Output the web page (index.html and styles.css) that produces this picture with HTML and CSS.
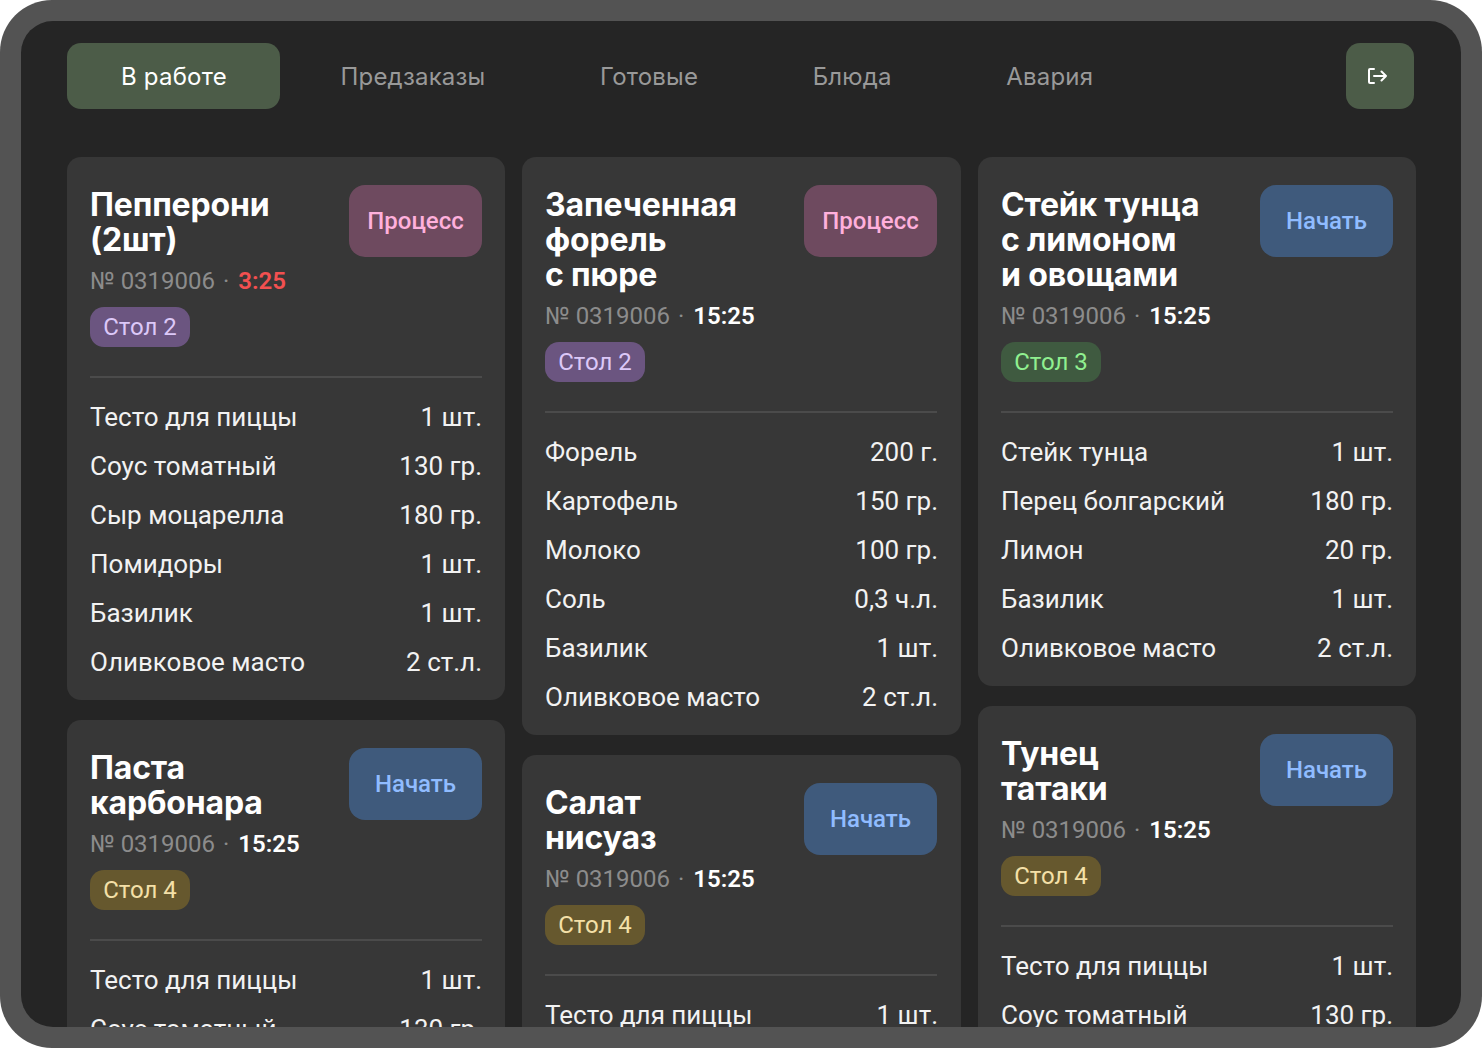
FILE: index.html
```html
<!DOCTYPE html>
<html lang="ru">
<head>
    <meta charset="UTF-8">
    <title>Кухня</title>
    <link rel="stylesheet" href="styles.css">
</head>
<body>
    <div class="frame">
        <div class="screen">
            <nav class="nav">
                <a class="tab active">В работе</a>
                <a class="tab">Предзаказы</a>
                <a class="tab">Готовые</a>
                <a class="tab">Блюда</a>
                <a class="tab">Авария</a>
                <button class="exit" aria-label="Выход">
                    <svg width="19" height="16" viewBox="0 0 19 16" fill="none" stroke="#fff" stroke-width="2" stroke-linecap="round" stroke-linejoin="round">
                        <path d="M6 1H2a1 1 0 0 0-1 1v12a1 1 0 0 0 1 1h4"/>
                        <path d="M6 8h12M13.500 3.500 18 8l-4.500 4.500"/>
                    </svg>
                </button>
            </nav>
            <main class="columns">
                <div class="column">
                    <section class="card">
                        <div class="card-head">
                            <div class="info">
                                <h2>Пепперони<br>(2шт)</h2>
                                <p class="meta">№ 0319006 <span class="dot">·</span> <b class="late">3:25</b></p>
                                <span class="badge purple">Стол 2</span>
                            </div>
                            <button class="action process">Процесс</button>
                        </div>
                        <ul class="items">
                            <li><span>Тесто для пиццы</span><span>1 шт.</span></li>
                            <li><span>Соус томатный</span><span>130 гр.</span></li>
                            <li><span>Сыр моцарелла</span><span>180 гр.</span></li>
                            <li><span>Помидоры</span><span>1 шт.</span></li>
                            <li><span>Базилик</span><span>1 шт.</span></li>
                            <li><span>Оливковое масто</span><span>2 ст.л.</span></li>
                        </ul>
                    </section>
                    <section class="card">
                        <div class="card-head">
                            <div class="info">
                                <h2>Паста<br>карбонара</h2>
                                <p class="meta">№ 0319006 <span class="dot">·</span> <b>15:25</b></p>
                                <span class="badge gold">Стол 4</span>
                            </div>
                            <button class="action start">Начать</button>
                        </div>
                        <ul class="items">
                            <li><span>Тесто для пиццы</span><span>1 шт.</span></li>
                            <li><span>Соус томатный</span><span>130 гр.</span></li>
                        </ul>
                    </section>
                </div>
                <div class="column">
                    <section class="card">
                        <div class="card-head">
                            <div class="info">
                                <h2>Запеченная<br>форель<br>с пюре</h2>
                                <p class="meta">№ 0319006 <span class="dot">·</span> <b>15:25</b></p>
                                <span class="badge purple">Стол 2</span>
                            </div>
                            <button class="action process">Процесс</button>
                        </div>
                        <ul class="items">
                            <li><span>Форель</span><span>200 г.</span></li>
                            <li><span>Картофель</span><span>150 гр.</span></li>
                            <li><span>Молоко</span><span>100 гр.</span></li>
                            <li><span>Соль</span><span>0,3 ч.л.</span></li>
                            <li><span>Базилик</span><span>1 шт.</span></li>
                            <li><span>Оливковое масто</span><span>2 ст.л.</span></li>
                        </ul>
                    </section>
                    <section class="card">
                        <div class="card-head">
                            <div class="info">
                                <h2>Салат<br>нисуаз</h2>
                                <p class="meta">№ 0319006 <span class="dot">·</span> <b>15:25</b></p>
                                <span class="badge gold">Стол 4</span>
                            </div>
                            <button class="action start">Начать</button>
                        </div>
                        <ul class="items">
                            <li><span>Тесто для пиццы</span><span>1 шт.</span></li>
                        </ul>
                    </section>
                </div>
                <div class="column">
                    <section class="card">
                        <div class="card-head">
                            <div class="info">
                                <h2>Стейк тунца<br>с лимоном<br>и овощами</h2>
                                <p class="meta">№ 0319006 <span class="dot">·</span> <b>15:25</b></p>
                                <span class="badge green">Стол 3</span>
                            </div>
                            <button class="action start">Начать</button>
                        </div>
                        <ul class="items">
                            <li><span>Стейк тунца</span><span>1 шт.</span></li>
                            <li><span>Перец болгарский</span><span>180 гр.</span></li>
                            <li><span>Лимон</span><span>20 гр.</span></li>
                            <li><span>Базилик</span><span>1 шт.</span></li>
                            <li><span>Оливковое масто</span><span>2 ст.л.</span></li>
                        </ul>
                    </section>
                    <section class="card">
                        <div class="card-head">
                            <div class="info">
                                <h2>Тунец<br>татаки</h2>
                                <p class="meta">№ 0319006 <span class="dot">·</span> <b>15:25</b></p>
                                <span class="badge gold">Стол 4</span>
                            </div>
                            <button class="action start">Начать</button>
                        </div>
                        <ul class="items">
                            <li><span>Тесто для пиццы</span><span>1 шт.</span></li>
                            <li><span>Соус томатный</span><span>130 гр.</span></li>
                        </ul>
                    </section>
                </div>
            </main>
        </div>
    </div>
</body>
</html>
```

FILE: styles.css
```css
* { box-sizing: border-box; }
body { margin: 0; background: #fff; font-family: Roboto, "Liberation Sans", sans-serif; }
.frame { width: 1482px; height: 1048px; padding: 21px; background: #535353; border-radius: 52px; }
.screen { height: 100%; padding: 22px 45px 0 46px; background: #252525; border-radius: 32px; overflow: hidden; }

.nav { display: flex; align-items: center; gap: 6.5px; height: 66px; margin-bottom: 48px; padding-right: 2px; }
.tab { display: flex; align-items: center; height: 66px; padding: 1px 54px 0; border-radius: 14px; font-family: Inter, sans-serif; font-size: 24px; letter-spacing: 0.2px; white-space: nowrap; color: #999; }
.tab.active { width: 213px; background: #4c5c48; color: #fff; }
.exit { display: flex; align-items: center; justify-content: center; width: 68px; height: 66px; margin-left: auto; padding: 0 6px 0 0; border: 0; border-radius: 14px; background: #4c5c48; }

.columns { display: grid; grid-template-columns: 438px 439px 438px; gap: 17px; }
.column { display: flex; flex-direction: column; gap: 20px; }
.card { padding: 28px 23px 0; background: #373737; border-radius: 14px; }
.column:nth-child(2) .card { padding-right: 24px; }
.column:nth-child(2) .items { margin-right: -1px; }
.card-head { display: flex; justify-content: space-between; align-items: flex-start; padding-bottom: 29px; border-bottom: 2px solid #4b4b4b; }

h2 { margin: 2px 0 9px; font-family: Inter, sans-serif; font-size: 32px; line-height: 35px; font-weight: 650; letter-spacing: -0.15px; color: #fff; }
.meta { margin: 0 0 11px; font-size: 24px; line-height: 30px; color: #8c8c8c; }
.meta b { margin-left: 1px; font-weight: 600; color: #fff; }
.meta b.late { color: #f25050; }
.dot { margin: 0 2px; }

.badge { display: block; width: 100px; height: 40px; border-radius: 14px; font-size: 24px; line-height: 40px; text-align: center; }
.purple { background: #6b5580; color: #dcc8f8; }
.gold { background: #66582e; color: #f4e0a8; }
.green { background: #3f5a40; color: #90f090; }

.action { flex: none; width: 133px; height: 72px; padding: 0; border: 0; border-radius: 16px; font-family: Roboto, sans-serif; font-size: 24px; font-weight: 500; }
.process { background: #6e4a5f; color: #ffb0dc; }
.start { background: #3f5a7c; color: #90bcff; }

.items { display: flex; flex-direction: column; gap: 20px; margin: 0; padding: 25px 0 23px; list-style: none; }
.items li { display: flex; justify-content: space-between; font-size: 26px; line-height: 29px; color: #f2f2f2; }
```
